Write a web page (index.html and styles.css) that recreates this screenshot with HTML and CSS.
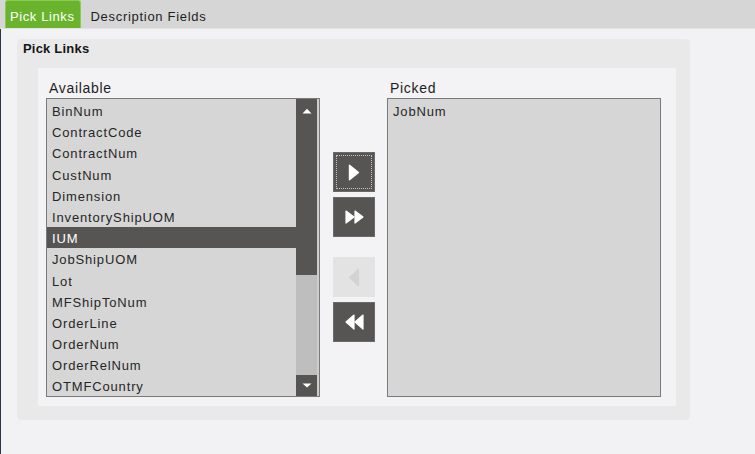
FILE: index.html
```html
<!DOCTYPE html>
<html>
<head>
<meta charset="utf-8">
<link rel="stylesheet" href="styles.css">
</head>
<body>
<div class="tabbar">
  <div class="tab tab-active">Pick Links</div>
  <div class="tab">Description Fields</div>
</div>
<div class="content">
  <div class="group">
    <div class="group-title">Pick Links</div>
    <div class="panel">
      <div class="col">
        <div class="label">Available</div>
        <div class="listbox">
          <div class="items">
            <div class="item">BinNum</div>
            <div class="item">ContractCode</div>
            <div class="item">ContractNum</div>
            <div class="item">CustNum</div>
            <div class="item">Dimension</div>
            <div class="item">InventoryShipUOM</div>
            <div class="item selected">IUM</div>
            <div class="item">JobShipUOM</div>
            <div class="item">Lot</div>
            <div class="item">MFShipToNum</div>
            <div class="item">OrderLine</div>
            <div class="item">OrderNum</div>
            <div class="item">OrderRelNum</div>
            <div class="item">OTMFCountry</div>
          </div>
          <div class="scrollbar">
            <div class="sb-inner">
              <div class="sb-thumb">
                <svg class="sb-arrow" width="10" height="6" viewBox="0 0 10 6"><polygon points="0.5,5.5 5,0.8 9.5,5.5" fill="#fff"/></svg>
              </div>
              <div class="sb-track"></div>
              <div class="sb-down">
                <svg class="sb-arrow" width="10" height="5" viewBox="0 0 10 5"><polygon points="0.5,0.5 9.5,0.5 5,4.6" fill="#fff"/></svg>
              </div>
            </div>
          </div>
        </div>
      </div>
      <div class="buttons">
        <div class="btn focused">
          <svg width="12" height="17" viewBox="0 0 12 17"><polygon points="1.5,1.2 10.5,8.5 1.5,15.8" fill="#fff" stroke="#fff" stroke-width="1.4" stroke-linejoin="round"/></svg>
        </div>
        <div class="btn">
          <svg width="19" height="14" viewBox="0 0 19 14"><polygon points="1,1 9,7 1,13" fill="#fff" stroke="#fff" stroke-width="1.2" stroke-linejoin="round"/><polygon points="10,1 18,7 10,13" fill="#fff" stroke="#fff" stroke-width="1.2" stroke-linejoin="round"/></svg>
        </div>
        <div class="btn disabled spaced">
          <svg width="12" height="19" viewBox="0 0 12 19"><polygon points="10.5,1.2 1.5,9.5 10.5,17.8" fill="#d3d3d3" stroke="#d3d3d3" stroke-width="1.2" stroke-linejoin="round"/></svg>
        </div>
        <div class="btn">
          <svg width="19" height="16" viewBox="0 0 19 16"><polygon points="9,1 1,8 9,15" fill="#fff" stroke="#fff" stroke-width="1.2" stroke-linejoin="round"/><polygon points="18,1 10,8 18,15" fill="#fff" stroke="#fff" stroke-width="1.2" stroke-linejoin="round"/></svg>
        </div>
      </div>
      <div class="col">
        <div class="label">Picked</div>
        <div class="listbox">
          <div class="items">
            <div class="item">JobNum</div>
          </div>
        </div>
      </div>
    </div>
  </div>
</div>
</body>
</html>
```
FILE: styles.css
```css
html, body {
  margin: 0;
  padding: 0;
}
body {
  background: #f2f2f4;
  font-family: "Liberation Sans", Arial, sans-serif;
  color: #242424;
  width: 755px;
  height: 454px;
  overflow: hidden;
}
.tabbar {
  height: 28px;
  background: #d6d6d6;
  border-bottom: 1px solid #e3e3e3;
  display: flex;
  padding-left: 5px;
}
.tab {
  font-size: 13px;
  letter-spacing: 0.7px;
  line-height: 24px;
  padding: 5px 9px 0 10px;
  color: #1e1e1e;
}
.tab-active {
  background: #6ab42d;
  color: #ffffff;
  border: 1px solid #8acb58;
  border-bottom: none;
  border-radius: 3px 3px 0 0;
  padding: 4px 5px 0 4px;
  margin-top: 0;
  height: 23px;
  letter-spacing: 0.6px;
}
.content {
  border-left: 1px solid #2c3644;
  height: 425px;
  padding: 10px 0 0 16px;
  box-sizing: border-box;
}
.group {
  width: 673px;
  height: 381px;
  background: #e9e9e9;
  border-radius: 4px;
  padding: 2px 14px 14px 21px;
  box-sizing: border-box;
  display: flex;
  flex-direction: column;
}
.group-title {
  font-size: 13px;
  font-weight: bold;
  line-height: 16px;
  letter-spacing: 0.2px;
  margin-left: -15px;
  color: #161616;
}
.panel {
  margin-top: 11px;
  flex: 1;
  background: #f3f3f5;
  display: flex;
  padding: 12px 0 0 8px;
}
.col {
  display: flex;
  flex-direction: column;
  width: 274px;
}
.label {
  font-size: 14px;
  line-height: 16px;
  letter-spacing: 0.7px;
  padding-left: 3px;
  margin-bottom: 2px;
  color: #1e1e1e;
}
.listbox {
  height: 299px;
  border: 1px solid #7a7a7a;
  background: #d6d6d6;
  box-sizing: border-box;
  display: flex;
}
.items {
  flex: 1;
  padding-top: 1px;
}
.item {
  font-size: 13px;
  box-sizing: border-box;
  height: 21.2px;
  padding-top: 2px;
  line-height: 19.2px;
  letter-spacing: 0.85px;
  padding-left: 5px;
  color: #262626;
  white-space: nowrap;
}
.item.selected {
  background: #575553;
  color: #ffffff;
}
.scrollbar {
  width: 23px;
  background: #cdcdcd;
}
.sb-inner {
  width: 21px;
  height: 100%;
  background: #bebebe;
  display: flex;
  flex-direction: column;
}
.sb-thumb {
  height: 176px;
  background: #575553;
  display: flex;
  justify-content: center;
  padding-top: 9px;
  box-sizing: border-box;
}
.sb-track {
  flex: 1;
}
.sb-down {
  height: 21px;
  background: #575553;
  display: flex;
  justify-content: center;
  padding-top: 8px;
  box-sizing: border-box;
}
.sb-arrow {
  display: block;
}
.buttons {
  width: 42px;
  margin: 0 12px 0 13px;
  padding-top: 72px;
  display: flex;
  flex-direction: column;
  gap: 5px;
}
.btn {
  position: relative;
  width: 42px;
  height: 40px;
  box-sizing: border-box;
  background: #575553;
  border: 1px solid #6c6a68;
  display: flex;
  align-items: center;
  justify-content: center;
}
.btn svg {
  display: block;
}
.btn.focused::after {
  content: "";
  position: absolute;
  left: 2px;
  top: 2px;
  right: 2px;
  bottom: 2px;
  border: 1px dotted #c4c4c4;
}
.btn.disabled {
  background: #e3e3e3;
  border-color: #e3e3e3;
}
.btn.spaced {
  margin-top: 15px;
}
```
